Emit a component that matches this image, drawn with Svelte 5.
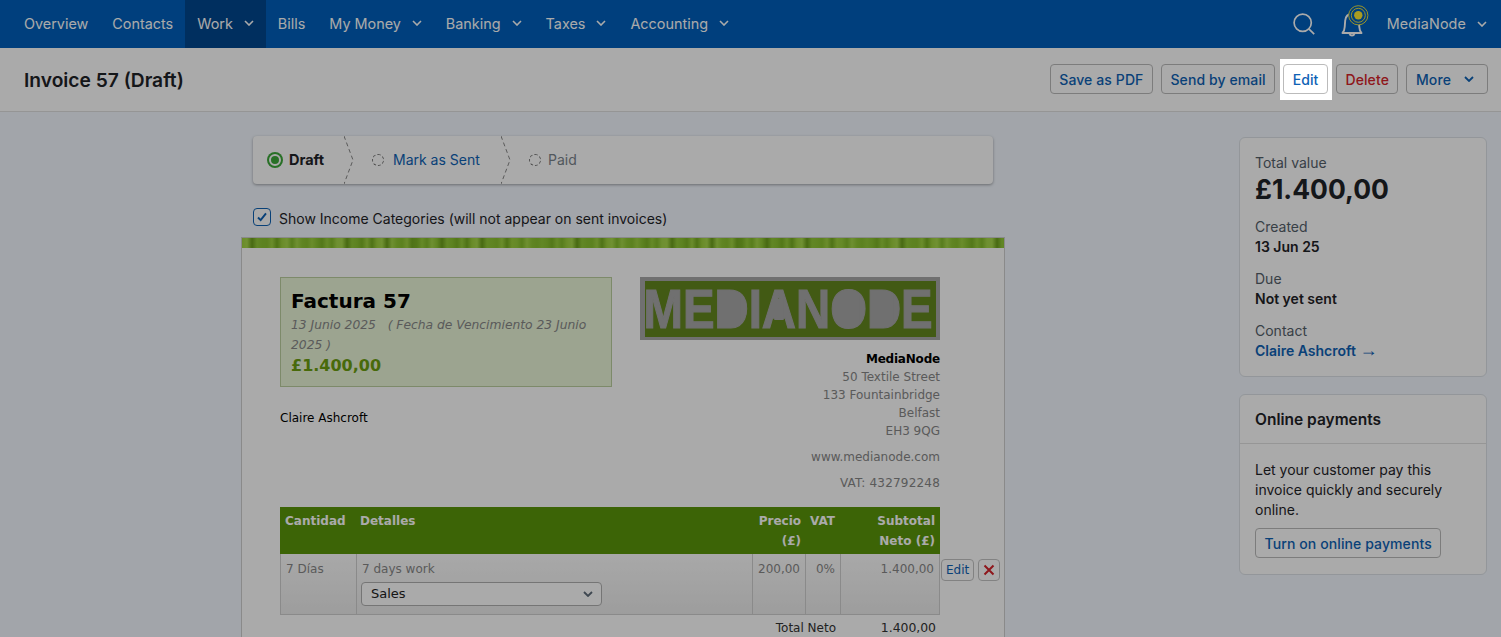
<script>
	const navItems = [
		{ label: 'Overview' },
		{ label: 'Contacts' },
		{ label: 'Work', menu: true, active: true },
		{ label: 'Bills' },
		{ label: 'My Money', menu: true },
		{ label: 'Banking', menu: true },
		{ label: 'Taxes', menu: true },
		{ label: 'Accounting', menu: true }
	];

	const addressLines = ['50 Textile Street', '133 Fountainbridge', 'Belfast', 'EH3 9QG'];
	const logoLetters = ['M', 'E', 'D', 'I', 'A', 'N', 'O', 'D', 'E'];

	// the invoice theme stripe is a noisy green band
	const shades = ['#9fd23e', '#8cc431', '#a6d84a', '#76ac22', '#93ca38', '#84bc2c', '#a0d342', '#6c9f1c', '#98ce3c', '#8ac22f', '#a9da4c', '#7db426', '#90c734'];
	const stripeStops = [];
	for (let i = 0; i <= 160; i++) {
		stripeStops.push(shades[(i * 7 + (i % 5) * 3) % shades.length] + ' ' + (i * 5) + 'px');
	}
	const stripe = 'linear-gradient(90deg, ' + stripeStops.join(', ') + ')';
</script>

<div class="page">
	<nav class="topnav">
		<ul class="nav-list">
			{#each navItems as item}
				<li class="nav-item" class:active={item.active}>
					<span>{item.label}</span>
					{#if item.menu}
						<svg class="chev" viewBox="0 0 10 6" fill="none" stroke="currentColor" stroke-width="1.6"><path d="M1 1l4 4 4-4" /></svg>
					{/if}
				</li>
			{/each}
		</ul>
		<div class="nav-right">
			<svg class="search" viewBox="0 0 22 22" fill="none" stroke="currentColor" stroke-width="1.7">
				<circle cx="9.7" cy="9.7" r="8.6" />
				<path d="M15.8 15.8l5.4 5.4" />
			</svg>
			<svg class="bell" viewBox="0 0 34 34" fill="none">
				<path d="M4.500 29c1.500-1.400 2-3 2.200-6l.5-6.500c.4-4 3-6.500 6.800-6.500s6.400 2.500 6.800 6.500l.5 6.500c.2 3 .7 4.600 2.200 6z" stroke="#fff" stroke-width="1.900" stroke-linejoin="round" />
				<path d="M11.500 30c.5 1 1.400 1.500 2.500 1.500s2-.5 2.500-1.500" stroke="#fff" stroke-width="1.900" />
				<circle cx="20.300" cy="11.300" r="9.600" fill="#005fbc" stroke="#ffeb33" stroke-width="0.900" />
				<circle cx="20.300" cy="11.300" r="7" stroke="#ffeb33" stroke-width="0.900" />
				<circle cx="20.300" cy="11.300" r="4.200" fill="#ffeb33" />
			</svg>
			<span class="account">MediaNode</span>
			<svg class="chev" viewBox="0 0 10 6" fill="none" stroke="currentColor" stroke-width="1.6"><path d="M1 1l4 4 4-4" /></svg>
		</div>
	</nav>

	<header class="title-bar">
		<h1>Invoice 57 (Draft)</h1>
		<div class="actions">
			<button class="btn">Save as PDF</button>
			<button class="btn">Send by email</button>
			<span class="spotlight">
				<button class="btn edit">Edit</button>
			</span>
			<button class="btn danger">Delete</button>
			<button class="btn more">
				More
				<svg class="chev" viewBox="0 0 10 6" fill="none" stroke="currentColor" stroke-width="1.8"><path d="M1 1l4 4 4-4" /></svg>
			</button>
		</div>
	</header>

	<main class="layout">
		<section class="content">
			<div class="steps">
				<div class="step first">
					<span class="radio-on"></span>
					<strong>Draft</strong>
				</div>
				<svg class="sep" viewBox="0 0 10 48" fill="none" stroke="#888" stroke-width="1" stroke-dasharray="4 3"><path d="M0 0l9 24-9 24" /></svg>
				<div class="step second">
					<span class="radio-off"></span>
					<span class="link">Mark as Sent</span>
				</div>
				<svg class="sep" viewBox="0 0 10 48" fill="none" stroke="#888" stroke-width="1" stroke-dasharray="4 3"><path d="M0 0l9 24-9 24" /></svg>
				<div class="step third">
					<span class="radio-off"></span>
					<span class="muted">Paid</span>
				</div>
			</div>

			<label class="categories">
				<span class="checkbox">
					<svg viewBox="0 0 18 18" fill="none" stroke="#0e62b5" stroke-width="2.200"><path d="M4.500 9.500l3 3 6-7.500" /></svg>
				</span>
				<span class="cat-text">Show Income Categories (will not appear on sent invoices)</span>
			</label>

			<article class="paper">
				<div class="stripe" style="background: {stripe}"></div>
				<div class="paper-body">
					<div class="paper-head">
						<div class="head-left">
							<div class="summary">
								<h2>Factura 57</h2>
								<p class="dates">13 Junio 2025 &nbsp; ( Fecha de Vencimiento 23 Junio 2025 )</p>
								<p class="amount">£1.400,00</p>
							</div>
							<p class="client">Claire Ashcroft</p>
						</div>
						<div class="head-right">
							<div class="logo">
								<div class="word">
									{#each logoLetters as letter}
										<span class="letter" class:solid={letter === 'D' || letter === 'O'} class:peak={letter === 'A'}>{letter}</span>
									{/each}
								</div>
							</div>
							<address class="address">
								<strong>MediaNode</strong>
								{#each addressLines as line}
									<span>{line}</span>
								{/each}
								<span class="spaced">www.medianode.com</span>
								<span class="spaced vat">VAT: 432792248</span>
							</address>
						</div>
					</div>

					<div class="lines">
						<div class="line-row line-head">
							<div>Cantidad</div>
							<div class="details">Detalles</div>
							<div class="num price">Precio (£)</div>
							<div class="num">VAT</div>
							<div class="num">Subtotal Neto (£)</div>
						</div>
						<div class="line-row line-item">
							<div>7 Días</div>
							<div>
								7 days work
								<div class="select">
									<span>Sales</span>
									<svg viewBox="0 0 10 6" fill="none" stroke="#5d6b78" stroke-width="1.800"><path d="M1 1l4 4 4-4" /></svg>
								</div>
							</div>
							<div class="num">200,00</div>
							<div class="num">0%</div>
							<div class="num">1.400,00</div>
							<div class="row-tools">
								<button class="mini">Edit</button>
								<button class="mini remove" aria-label="Remove">
									<svg viewBox="0 0 12 12" fill="none" stroke="#d6232a" stroke-width="2"><path d="M1.500 1.500l9 9M10.500 1.500l-9 9" /></svg>
								</button>
							</div>
						</div>
						<div class="total">
							<span>Total Neto</span>
							<span class="total-value">1.400,00</span>
						</div>
					</div>
				</div>
			</article>
		</section>

		<aside class="sidebar">
			<div class="card facts">
				<div class="label">Total value</div>
				<div class="big">£1.400,00</div>
				<div class="label gap">Created</div>
				<div class="value">13 Jun 25</div>
				<div class="label gap">Due</div>
				<div class="value">Not yet sent</div>
				<div class="label gap">Contact</div>
				<div class="value link">Claire Ashcroft <span class="arrow">→</span></div>
			</div>
			<div class="card">
				<h3>Online payments</h3>
				<div class="card-body">
					<p>Let your customer pay this invoice quickly and securely online.</p>
					<button class="btn">Turn on online payments</button>
				</div>
			</div>
		</aside>
	</main>
</div>

<style>
	:global(body) {
		margin: 0;
		background: #f3f8ff;
	}

	.page {
		height: 637px;
		overflow: hidden;
		font-family: Inter, "Liberation Sans", sans-serif;
		color: #1f2327;
		font-size: 14px;
	}

	.topnav {
		height: 48px;
		background: #005fbc;
		color: #fff;
		display: flex;
		justify-content: space-between;
		align-items: center;
		padding: 0 14px 0 12px;
	}

	.nav-list {
		display: flex;
		list-style: none;
		margin: 0;
		padding: 0;
		height: 100%;
	}

	.nav-item {
		display: flex;
		align-items: center;
		gap: 11px;
		padding: 0 12px 2px;
		box-sizing: border-box;
		font-size: 14.4px;
		height: 100%;
	}

	.nav-item.active {
		background: #00478f;
	}

	.chev {
		width: 10px;
		height: 6px;
	}

	.nav-right {
		display: flex;
		align-items: center;
	}

	.account {
		font-size: 14.3px;
		margin: -2px 11px 0 0;
		letter-spacing: 0.15px;
	}

	.search {
		width: 22px;
		height: 22px;
		margin-right: 23px;
	}

	.bell {
		width: 34px;
		height: 34px;
		margin: -6px 15px 0 0;
	}

	.title-bar {
		height: 64px;
		box-sizing: border-box;
		background: #fff;
		border-bottom: 1px solid #e0e0e0;
		display: flex;
		justify-content: space-between;
		align-items: center;
		padding: 0 13px 1px 24px;
	}

	h1 {
		font-size: 19.2px;
		font-weight: 600;
		margin: 2px 0 0;
	}

	.actions {
		display: flex;
		gap: 8px;
	}

	.btn {
		height: 30px;
		box-sizing: border-box;
		padding: 0 8.5px;
		background: #fff;
		border: 1px solid #bbb;
		border-radius: 4px;
		font: 500 14px Inter, "Liberation Sans", sans-serif;
		letter-spacing: 0.1px;
		color: #0e62b5;
	}

	.danger {
		color: #d6232a;
	}

	.more {
		display: flex;
		align-items: center;
		gap: 13px;
		padding-right: 13px;
	}

	/* white cut-out in the dim layer, the Edit button sits on top of it */
	.spotlight {
		position: relative;
		z-index: 10;
		display: flex;
	}

	.spotlight::before {
		content: '';
		position: absolute;
		inset: -5px -4px -6px -3px;
		background: #fff;
		box-shadow: 0 0 0 3000px rgba(0, 0, 0, 0.335);
		z-index: -1;
	}

	.layout {
		display: grid;
		grid-template-columns: 764px 248px;
		column-gap: 234px;
		padding: 24px 0 0 241px;
	}

	.steps {
		margin-left: 12px;
		width: 740px;
		height: 48px;
		background: #fff;
		border-radius: 4px;
		box-shadow: 0 1px 3px rgba(0, 0, 0, 0.35);
		display: flex;
		align-items: center;
		font-size: 14px;
	}

	.step {
		display: flex;
		align-items: center;
		padding-bottom: 1px;
	}

	.first {
		gap: 7px;
		padding-left: 15px;
		width: 76px;
		font-size: 14.5px;
	}

	.second {
		gap: 9px;
		padding-left: 18px;
		width: 129px;
	}

	.third {
		gap: 7px;
		padding-left: 18px;
	}

	.sep {
		width: 10px;
		height: 48px;
		flex: none;
	}

	.radio-on {
		width: 8px;
		height: 8px;
		border-radius: 50%;
		background: #3da83a;
		border: 2px solid #fff;
		box-shadow: 0 0 0 2px #3da83a;
		margin: 0 1px;
	}

	.radio-off {
		width: 12px;
		height: 12px;
		box-sizing: border-box;
		border: 1px dashed #777;
		border-radius: 50%;
	}

	.link {
		color: #0e62b5;
	}

	.muted {
		color: #7a848c;
	}

	.categories {
		display: flex;
		align-items: center;
		gap: 8px;
		margin: 24px 0 11px 12px;
		font-size: 14px;
		height: 18px;
	}

	.cat-text {
		padding-top: 2px;
	}

	.checkbox {
		width: 18px;
		height: 18px;
		box-sizing: border-box;
		border: 1px solid #0e62b5;
		border-radius: 4px;
		background: #fff;
		display: flex;
	}

	.paper {
		background: #fff;
		border: 1px solid #d0d0d0;
		font-family: "DejaVu Sans", sans-serif;
		font-size: 12px;
		color: #888;
	}

	.stripe {
		height: 10px;
	}

	.paper-body {
		padding: 29px 64px 0 38px;
	}

	.paper-head {
		display: flex;
		justify-content: space-between;
	}

	.head-left {
		width: 332px;
	}

	.summary {
		box-sizing: border-box;
		height: 110px;
		background: #eaf6d8;
		border: 1px solid #bccf9f;
		padding: 10px;
	}

	h2 {
		margin: 0;
		font-size: 20px;
		line-height: 27px;
		color: #000;
	}

	.dates {
		margin: 0;
		font-size: 12.3px;
		font-style: italic;
		line-height: 20px;
	}

	.amount {
		margin: 0;
		font-size: 16px;
		font-weight: bold;
		line-height: 22px;
		color: #6da010;
	}

	.client {
		margin: 24px 0 0;
		color: #000;
	}

	.head-right {
		width: 300px;
	}

	.logo {
		box-sizing: border-box;
		height: 63px;
		background: #63871f;
		border: solid #a8a8a8;
		border-width: 4px 4px 3px 5px;
		padding-right: 4px;
		display: flex;
		justify-content: center;
		align-items: center;
		overflow: hidden;
	}

	.word {
		flex: none;
		display: flex;
		font: bold 55px/1 "Liberation Sans", sans-serif;
		color: #a8a8a8;
		transform: scaleX(0.86);
	}

	.letter {
		position: relative;
		-webkit-text-stroke: 1.2px #a8a8a8;
	}

	/* the logo face has no counters in D, O and the top of A */
	.solid::after,
	.peak::after {
		content: '';
		position: absolute;
		background: #a8a8a8;
		top: 13px;
		bottom: 13px;
		left: 9px;
		right: 9px;
	}

	.peak::after {
		top: 17px;
		bottom: 17px;
		left: 14px;
		right: 14px;
	}

	.address {
		display: flex;
		flex-direction: column;
		text-align: right;
		font-style: normal;
		line-height: 18px;
		margin-top: 10px;
	}

	.address strong {
		color: #000;
		letter-spacing: -0.2px;
	}

	.spaced {
		margin-top: 8px;
	}

	.vat {
		letter-spacing: 0.2px;
	}

	.lines {
		margin-top: 15px;
		width: 660px;
	}

	.line-row {
		display: grid;
		grid-template-columns: 76px 396px 53px 35px 100px;
	}

	.line-head {
		height: 47px;
		background: #5a960a;
		color: #fff;
		font-weight: bold;
		line-height: 20px;
	}

	.line-head > div {
		padding: 4px 5px 0;
	}

	.line-head > .details {
		padding-left: 4px;
	}

	.line-head > .price {
		padding-right: 4px;
	}

	.num {
		text-align: right;
	}

	.line-item {
		position: relative;
		grid-template-columns: 76px 396px 53px 35px 99px;
		height: 61px;
		box-sizing: border-box;
		background: linear-gradient(#fdfdfd, #ececec);
		border: solid #cfcfcf;
		border-width: 0 0 1px 1px;
		line-height: 20px;
	}

	.line-item > div {
		padding: 5px;
		border-right: 1px solid #cfcfcf;
	}

	.line-item > .row-tools {
		position: absolute;
		left: calc(100% + 1px);
		top: 5px;
		padding: 0;
		border: 0;
		display: flex;
		gap: 4px;
	}

	.mini {
		height: 22px;
		box-sizing: border-box;
		padding: 0 4px;
		background: #fff;
		border: 1px solid #c4c4c4;
		border-radius: 4px;
		font: 12px "DejaVu Sans", sans-serif;
		color: #0e62b5;
	}

	.remove {
		width: 22px;
		padding: 0;
		display: flex;
		align-items: center;
		justify-content: center;
	}

	.remove svg {
		width: 12px;
		height: 12px;
	}

	.select {
		box-sizing: border-box;
		width: 241px;
		height: 24px;
		margin: 3px 0 0 -1px;
		padding: 0 8px 0 9px;
		background: #fff;
		border: 1px solid #b0b0b0;
		border-radius: 4px;
		color: #222;
		font-size: 13px;
		display: flex;
		justify-content: space-between;
		align-items: center;
	}

	.select svg {
		width: 10px;
		height: 6px;
	}

	.total {
		display: flex;
		justify-content: flex-end;
		color: #333;
		padding: 3px 4px 0 0;
		line-height: 20px;
	}

	.total-value {
		width: 100px;
		text-align: right;
		font-size: 12.4px;
	}

	.sidebar {
		display: flex;
		flex-direction: column;
		gap: 17px;
		padding-top: 1px;
	}

	.card {
		box-sizing: border-box;
		background: #fff;
		border: 1px solid #dde2e8;
		border-radius: 6px;
	}

	.facts {
		height: 240px;
		padding: 15px;
		line-height: 20px;
		font-size: 14px;
	}

	.label {
		color: #55606a;
	}

	.gap {
		margin-top: 12px;
	}

	.big {
		font-size: 26.5px;
		font-weight: 700;
		line-height: 32px;
	}

	.value {
		font-weight: 600;
	}

	.arrow {
		font-family: "Liberation Sans", sans-serif;
		font-weight: 400;
		font-size: 18px;
		line-height: 0;
	}

	h3 {
		margin: 0;
		padding: 0 15px;
		height: 49px;
		box-sizing: border-box;
		line-height: 50px;
		font-size: 15.5px;
		font-weight: 600;
		border-bottom: 1px solid #e2e2e2;
	}

	.card-body {
		padding: 16px 15px;
	}

	.card-body p {
		margin: 0 0 8px;
		line-height: 20px;
	}
</style>
